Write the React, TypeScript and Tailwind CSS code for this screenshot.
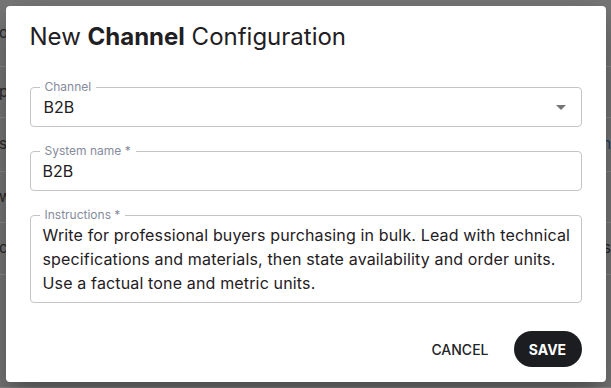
const rows = [
  { h: 'h-[67px]', left: 'op', right: '' },
  { h: 'h-[51px]', left: 'pr', right: '' },
  { h: 'h-[54px]', left: 'sy', right: 'n' },
  { h: 'h-[51px]', left: 'wr', right: '' },
  { h: 'h-[52px]', left: 'co', right: 'us' },
  { h: 'h-[113px]', left: '', right: '' },
]

const Field = ({ label, children, className }: { label: string; children: React.ReactNode; className?: string }) => {
  return (
    <div className={"relative rounded-[4px] border border-[#c4c4c4] " + (className ?? '')}>
      <span className="absolute left-[9px] top-[-8px] bg-white px-[5px] text-[12px] leading-[14px] text-[#868b9c]">
        {label}
      </span>
      {children}
    </div>
  )
}

const App = () => {
  return (
    <div className="relative h-[388px] w-[611px] overflow-hidden bg-[#787878]" style={{ fontFamily: 'Inter, "Noto Sans", sans-serif' }}>
      {/* dimmed page behind the dialog */}
      <div className="flex flex-col">
        {rows.map((r, i) => (
          <div key={i} className={r.h + " flex items-center justify-between border-b border-[#8a8a8a] text-[15px] text-[#2a2a2a]"}>
            <span className="-ml-[1px]">{r.left}</span>
            <span className={r.right === 'n' ? "text-[#1d3f66]" : ""}>{r.right}</span>
          </div>
        ))}
      </div>

      <div className="absolute inset-0 flex items-center justify-center">
        <div className="w-[600px] rounded-[4px] bg-white shadow-[0_11px_15px_-7px_rgba(0,0,0,0.2),0_24px_38px_3px_rgba(0,0,0,0.14),0_9px_46px_8px_rgba(0,0,0,0.12)]">
          <h2 className="px-6 pt-3 text-[24px] leading-[38px] text-[#1f2023]">
            New <span className="font-bold">Channel</span> Configuration
          </h2>

          <div className="px-6">
            <Field label="Channel" className="mt-[31px] flex h-[40px] items-center justify-between pl-[13px] pr-[8px]">
              <span className="text-[16px] text-[#1f2023]">B2B</span>
              <svg width="24" height="24" viewBox="0 0 24 24" className="fill-[#757575]">
                <path d="M7 10l5 5 5-5z" />
              </svg>
            </Field>

            <Field label="System name *" className="mt-6 flex h-[40px] items-center pl-[12px]">
              <span className="text-[16px] text-[#1f2023]">B2B</span>
            </Field>

            <Field label="Instructions *" className="mt-6 pl-[12px] pt-[7px] pb-[7px]">
              <div className="text-[16px] leading-6 tracking-[0.15px] text-[#1f2023]">
                <div className="whitespace-nowrap">Write for professional buyers purchasing in bulk. Lead with technical</div>
                <div className="whitespace-nowrap">specifications and materials, then state availability and order units.</div>
                <div className="whitespace-nowrap">Use a factual tone and metric units.</div>
              </div>
            </Field>
          </div>

          <div className="mt-[28px] flex items-center justify-end gap-[17px] px-6 pb-[15px]">
            <button className="h-[36px] px-2 text-[14px] font-medium uppercase text-[#222326]">
              Cancel
            </button>
            <button className="flex h-[36px] w-[68px] items-center justify-center rounded-full bg-[#1c1d21] text-[14px] font-bold uppercase text-white">
              Save
            </button>
          </div>
        </div>
      </div>
    </div>
  )
}

export default App
